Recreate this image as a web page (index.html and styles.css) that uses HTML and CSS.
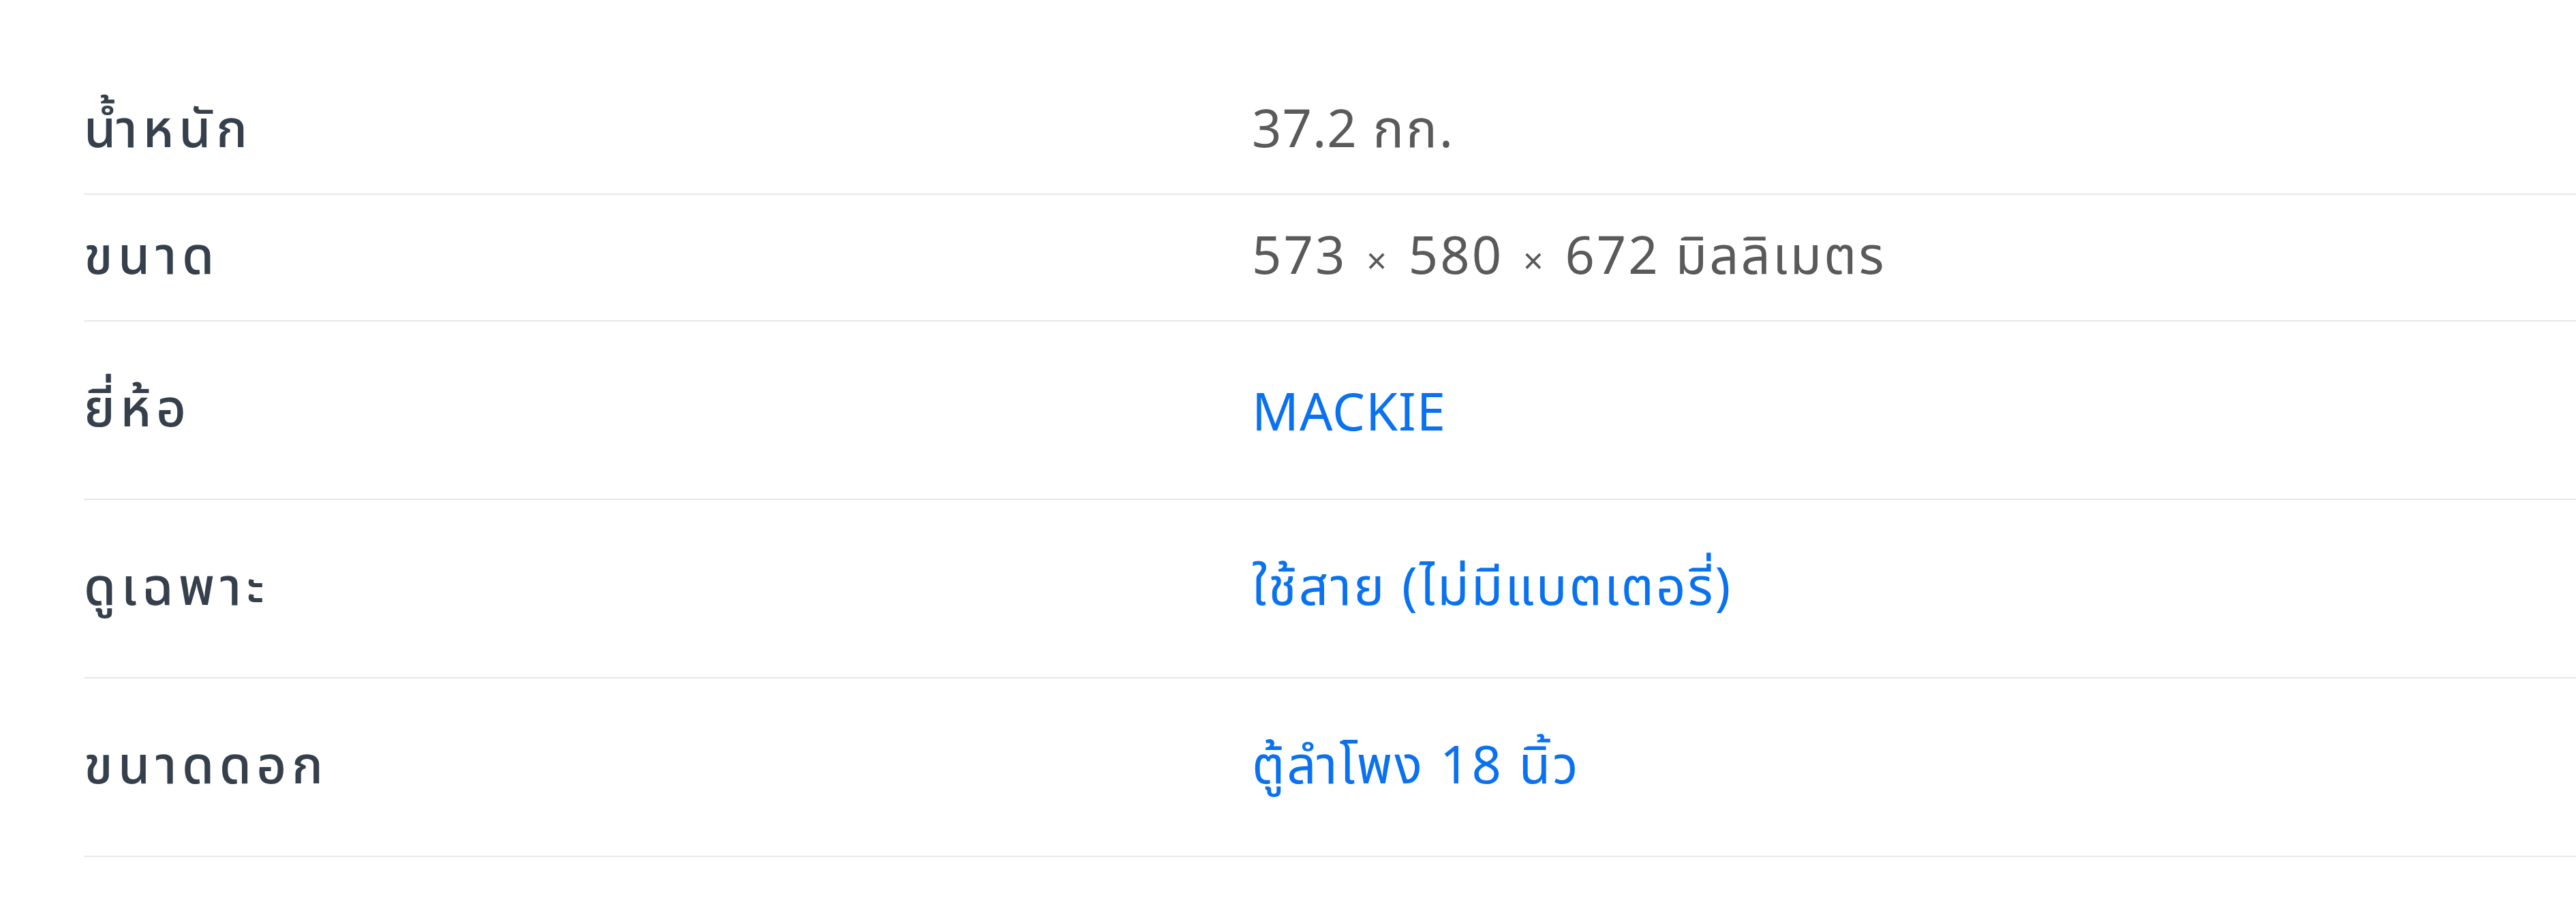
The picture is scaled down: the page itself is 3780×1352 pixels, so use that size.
FILE: index.html
```html
<!DOCTYPE html>
<html lang="th">
<head>
    <meta charset="UTF-8">
    <meta name="viewport" content="width=device-width, initial-scale=1.0">
    <title>ข้อมูลสินค้า</title>
    <link rel="stylesheet" href="styles.css">
</head>
<body>
    <!-- Product specification table -->
    <div class="spec-table">
        <div class="spec-row">
            <div class="spec-label">น้ำหนัก</div>
            <div class="spec-value"><span class="num">37.2</span> กก.</div>
        </div>
        <div class="spec-row">
            <div class="spec-label">ขนาด</div>
            <div class="spec-value">573 <span class="times">×</span> 580 <span class="times">×</span> 672 มิลลิเมตร</div>
        </div>
        <div class="spec-row tall">
            <div class="spec-label">ยี่ห้อ</div>
            <div class="spec-value"><a href="#" class="brand">MACKIE</a></div>
        </div>
        <div class="spec-row tall">
            <div class="spec-label">ดูเฉพาะ</div>
            <div class="spec-value"><a href="#">ใช้สาย (ไม่มีแบตเตอรี่)</a></div>
        </div>
        <div class="spec-row tall">
            <div class="spec-label">ขนาดดอก</div>
            <div class="spec-value"><a href="#">ตู้ลำโพง 18 นิ้ว</a></div>
        </div>
    </div>
</body>
</html>
```

FILE: styles.css
```css
body {
    margin: 0;
    background-color: #ffffff;
    font-family: "Noto Sans", "Noto Sans Thai", sans-serif;
}
.spec-table {
    padding: 100px 0 0 123px;
}
.spec-row {
    display: grid;
    grid-template-columns: 1714px 1fr;
    align-items: center;
    height: 186px;
    border-bottom: 2px solid #e8e8e8;
    box-sizing: border-box;
    font-size: 76px;
}
.spec-row.tall {
    height: 262px;
}
.spec-label {
    color: #36404c;
    font-weight: 500;
    letter-spacing: 7.5px;
}
.spec-value {
    color: #5a5a5a;
    letter-spacing: 3px;
}
.spec-value .num {
    letter-spacing: 1px;
}
.spec-value .times {
    font-size: 52px;
    margin: 0 6px;
}
.spec-value a {
    color: #0a72f0;
    text-decoration: none;
}
.spec-value a.brand {
    letter-spacing: 1px;
}
```
